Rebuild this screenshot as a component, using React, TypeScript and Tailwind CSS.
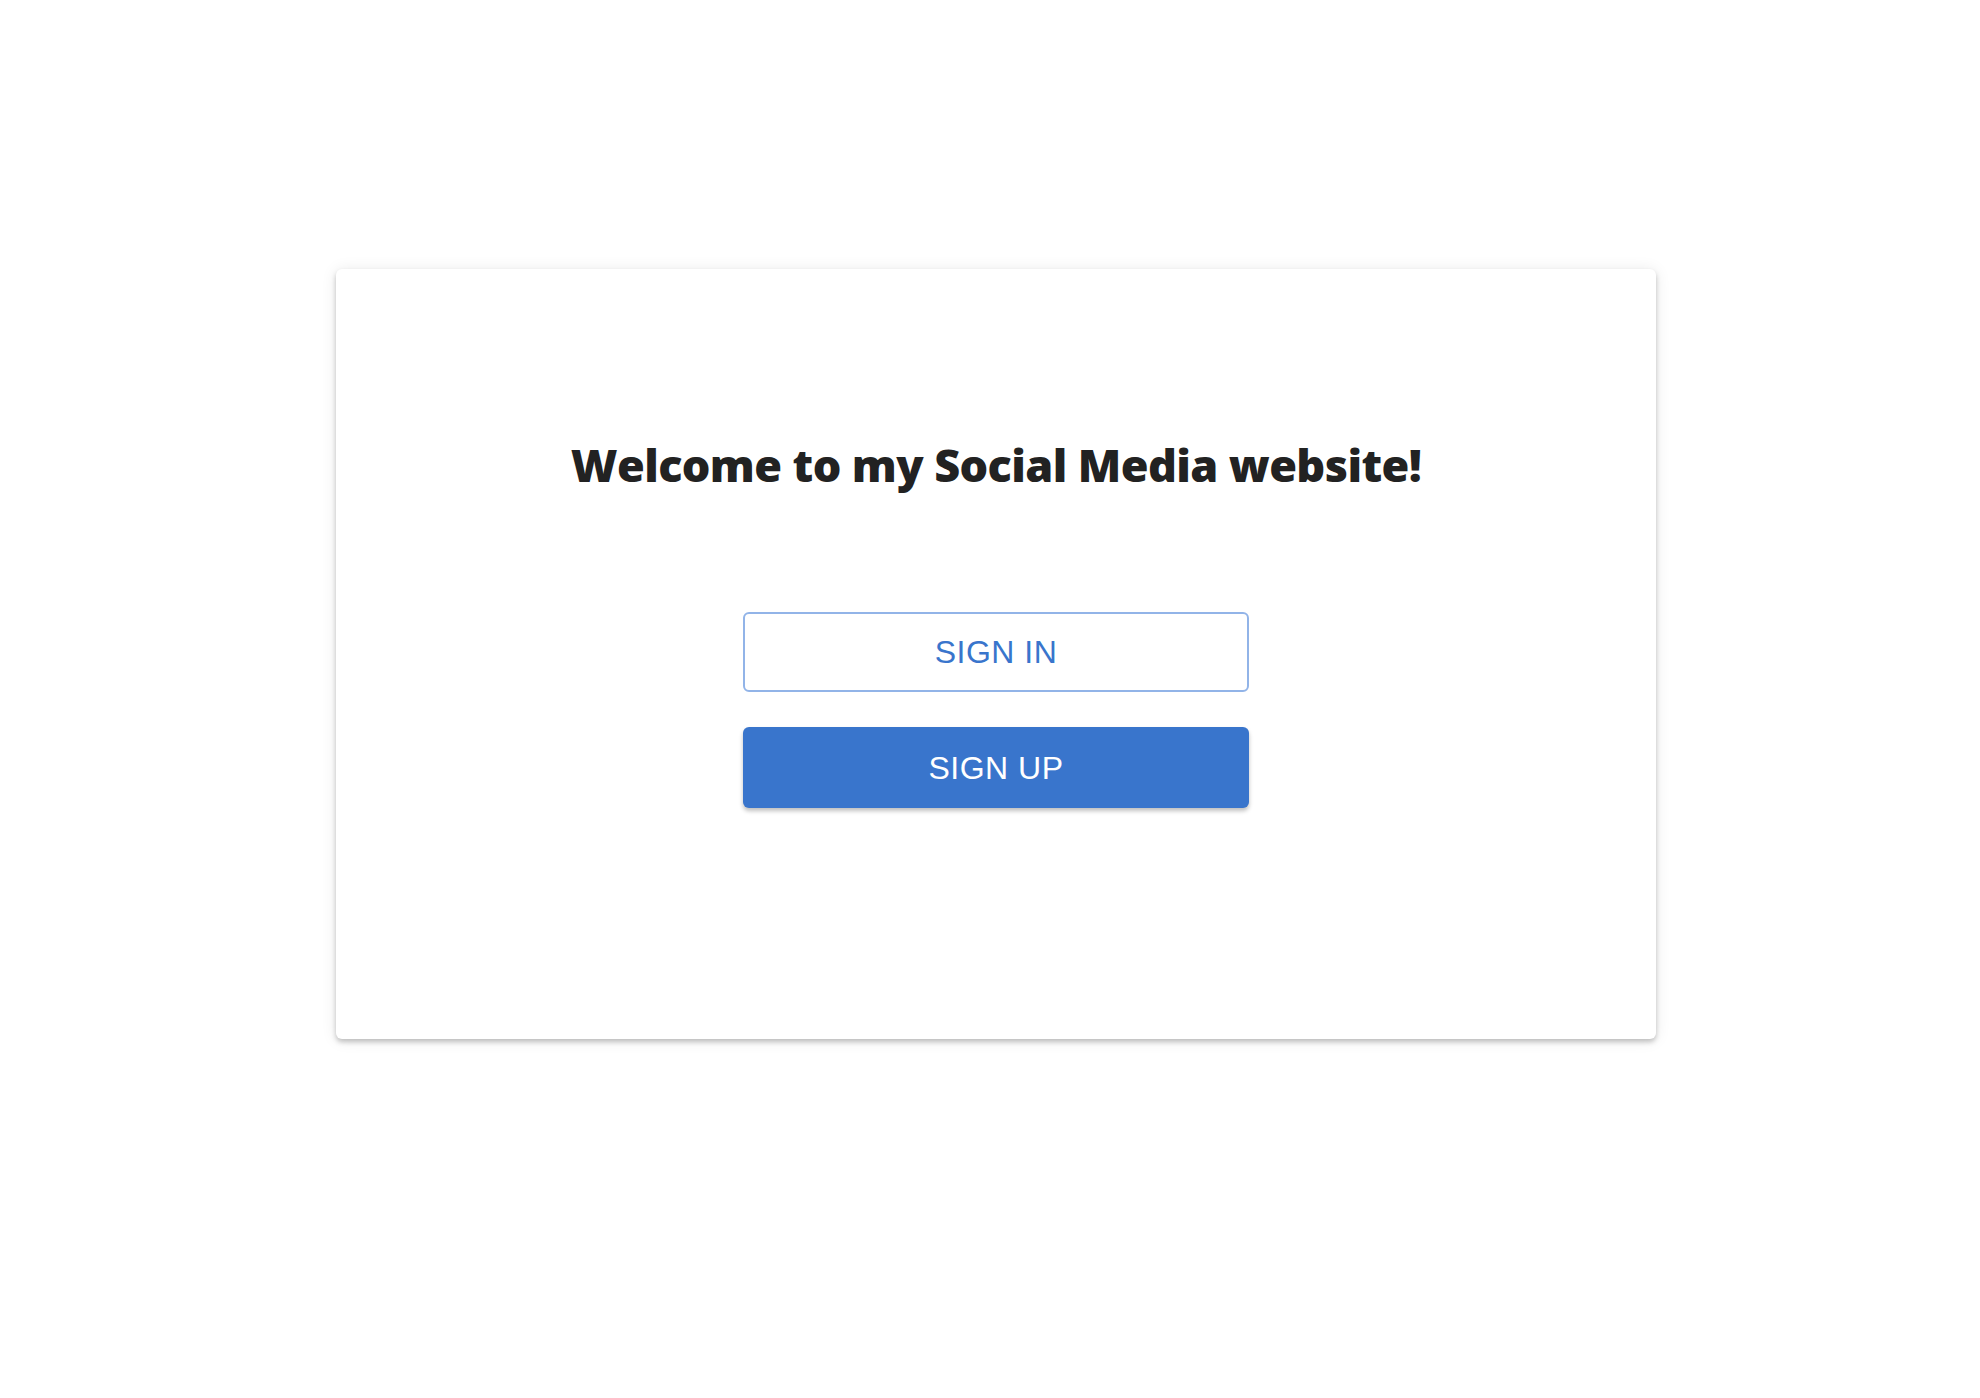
export default function App() {
  return (
    <div className="min-h-screen bg-white flex justify-center pl-[12px] pt-[269px]">
      {/* Welcome card */}
      <div className="w-[1320px] h-[770px] bg-white rounded-[6px] shadow-[0_3px_5px_rgba(0,0,0,0.22),0_1px_16px_rgba(0,0,0,0.09)] flex flex-col items-center pt-[168px]">
        <h1 className="font-['Open_Sans',sans-serif] font-extrabold text-[45px] leading-[56px] text-[#222222] tracking-[-0.6px]">
          Welcome to my Social Media website!
        </h1>
        <div className="flex flex-col gap-[35px] mt-[119px]">
          <button className="w-[506px] h-[80px] rounded-[6px] border-2 border-[#92b4e8] bg-white text-[#3975cc] font-['Liberation_Sans',Arial,sans-serif] text-[32px] tracking-[0.5px]">
            SIGN IN
          </button>
          <button className="w-[506px] h-[81px] rounded-[6px] bg-[#3975cc] text-white font-['Liberation_Sans',Arial,sans-serif] text-[32px] tracking-[0.5px] shadow-[0_3px_4px_rgba(0,0,0,0.25)]">
            SIGN UP
          </button>
        </div>
      </div>
    </div>
  );
}
